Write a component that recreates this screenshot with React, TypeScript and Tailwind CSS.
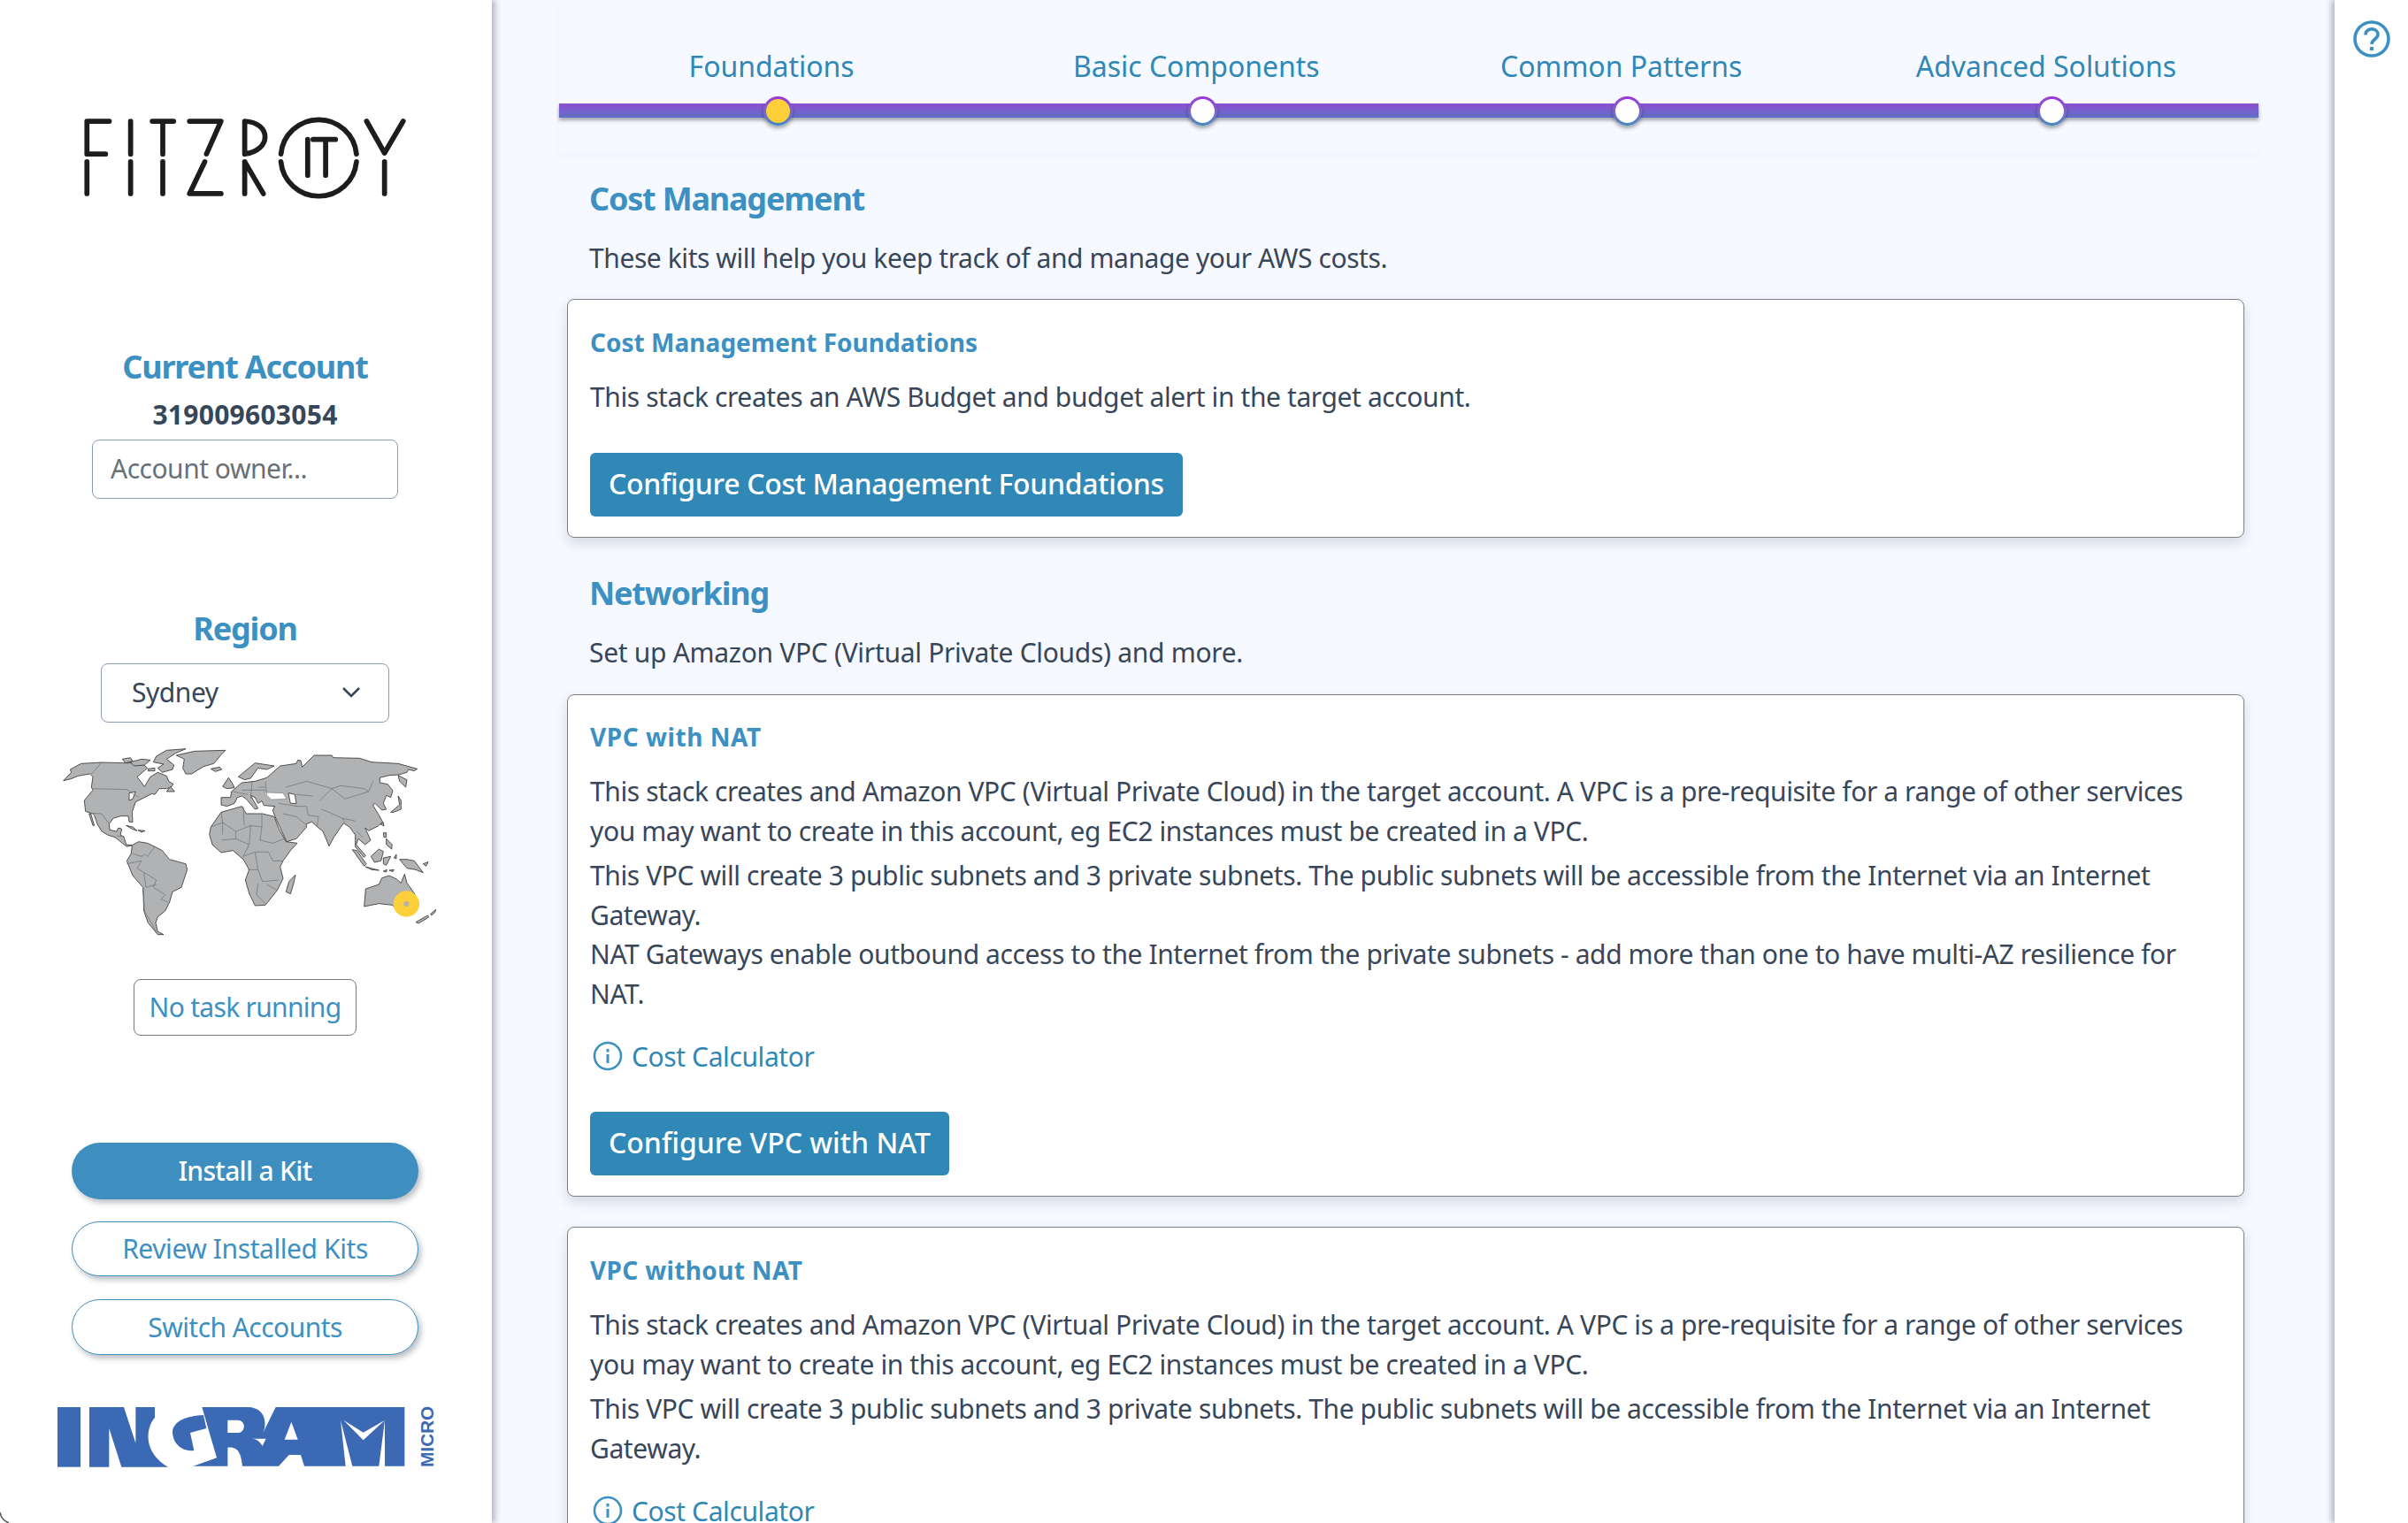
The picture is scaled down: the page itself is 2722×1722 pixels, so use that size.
import React from "react";

const font = { fontFamily: '"Noto Sans", sans-serif' };

function FitzroyLogo() {
  return (
    <svg width="372" height="98" viewBox="240 335 972 255" fill="none" stroke="#1d1d1f" strokeWidth="15" strokeLinecap="round" strokeLinejoin="round">
      <path d="M259 572V478M259 455V358H325M259 455H314" />
      <path d="M388 358V455M388 478V572" />
      <path d="M452 358H515M483 358V455M483 478V572" />
      <path d="M562 358H655L612 455M607 478L562 572H655" />
      <path d="M725 358V455C805 445 805 362 725 358ZM725 478V572M725 478L780 572" />
      <path d="M832 455A112 112 0 0 1 1055 455M832 478A112 112 0 0 0 1055 478" />
      <path d="M911 412V518M927 412H993M964 412V518" />
      <path d="M1085 358L1138 452L1193 358M1138 478V572" />
    </svg>
  );
}

function WorldMap() {
  const land = { fill: "#b1b2b4", stroke: "#2e2e2e", strokeWidth: 2.4, strokeLinejoin: "round" as const };
  return (
    <svg width="440" height="220" viewBox="0 0 1320 660" className="relative">
      <g {...land}>
        <polygon points="35,128 62,100 58,90 95,70 165,66 235,68 300,68 320,85 285,115 310,148 330,115 355,100 385,112 392,130 408,140 400,150 385,155 360,155 345,175 335,172 310,185 280,200 268,235 270,268 258,268 255,248 230,248 205,255 190,275 192,295 215,300 222,288 233,292 228,312 240,318 248,345 268,347 250,352 235,340 210,320 185,312 165,300 150,275 140,245 135,240 110,232 106,195 135,160 130,150 135,115 125,105 85,112 60,122" />
        <polygon points="122,240 135,280 140,280 128,240" />
        <polygon points="235,55 262,50 270,62 245,68" />
        <polygon points="262,65 300,55 330,58 310,75 275,78" />
        <polygon points="350,45 385,25 450,20 415,35 385,55 410,75 405,90 370,100 355,85 375,72 340,65" />
        <polygon points="322,88 345,85 345,95 322,95" />
        <polygon points="418,42 480,28 585,25 570,40 545,70 510,80 470,105 450,105 440,85 445,55" />
        <polygon points="535,88 565,82 572,90 550,97" />
        <polygon points="248,280 270,285 285,298 268,292" />
        <polygon points="288,296 312,298 300,303" />
        <polygon points="385,165 412,165 398,148" />
        <polygon points="258,170 280,165 270,190 258,195" fill="#fff" />
        <polygon points="268,347 290,335 320,340 345,352 370,365 395,395 450,410 455,430 435,490 405,505 395,540 380,570 355,590 348,610 355,640 375,650 355,650 322,610 308,570 305,490 270,450 250,400 265,375" />
      </g>
      <g fill="none" stroke="#6a6c70" strokeWidth="2">
        <polyline points="135,155 250,158 290,185" />
        <polyline points="165,66 130,105" />
        <polyline points="125,238 165,240 190,275" />
        <polyline points="215,315 240,318" />
        <polyline points="270,375 300,385 310,378 320,385 345,352" />
        <polyline points="250,410 300,400 285,425 350,465 340,490 380,515 365,530 390,540" />
        <polyline points="308,440 315,490 350,480" />
        <polyline points="305,490 310,570 350,640" />
      </g>
      <g transform="translate(480,0)">
        <g {...land}>
          <polygon points="50,310 55,285 90,235 160,215 175,240 230,240 270,250 285,290 310,335 348,340 325,365 300,400 290,420 300,460 280,500 240,550 205,552 185,510 172,465 185,430 165,395 130,365 90,372 60,345" />
          <polygon points="310,505 320,470 342,448 335,480 325,512" />
          <polygon points="245,118 290,78 345,70 350,58 360,60 365,82 405,42 465,42 470,50 560,52 600,65 690,70 755,88 745,95 725,90 720,100 692,108 660,110 628,118 628,135 655,140 672,162 665,185 650,178 640,205 650,225 635,228 612,205 604,210 625,245 638,268 622,282 590,298 578,288 597,330 578,345 555,325 548,345 580,382 574,388 545,352 545,312 525,285 505,272 472,320 456,350 435,300 420,288 398,268 378,275 380,285 345,325 312,335 272,248 265,228 272,215 235,212 228,197 215,205 205,185 190,178 215,222 205,225 175,190 160,180 145,185 135,205 110,215 90,210 90,185 122,185 125,165 160,135 205,130" />
          <polygon points="690,110 720,125 716,150 695,130" />
          <polygon points="148,115 205,68 270,78 245,90 215,85 190,120 170,125" />
          <polygon points="95,148 115,118 130,140 135,152 110,155" />
          <polygon points="535,362 550,365 582,410 575,418" />
          <polygon points="580,420 625,432 600,430" />
          <polygon points="598,385 625,360 640,368 632,400 610,405" />
          <polygon points="640,390 665,385 650,415 640,410" />
          <polygon points="640,305 650,305 650,320 642,320" />
          <polygon points="650,325 670,345 668,360 650,345" />
          <polygon points="695,395 720,395 745,400 775,440 750,430 720,425" />
          <polygon points="750,608 790,585 795,590 760,612" />
          <polygon points="800,580 818,565 815,575 803,585" />
          <polygon points="665,235 695,210 690,180 700,195 700,225 675,235" />
          <polygon points="630,275 640,270 642,282" />
          <polygon points="640,435 652,430 650,438" />
          <polygon points="660,432 676,430 672,437" />
          <polygon points="676,390 684,378 684,392" />
          <polygon points="775,410 792,404 785,418" />
          <polygon points="575,555 580,495 625,480 635,458 660,450 685,462 700,475 712,445 720,475 745,510 760,550 745,575 700,575 670,550 625,545" />
          <polygon points="235,168 300,170 312,190 260,192" fill="#fff" strokeWidth="1" />
          <polygon points="318,170 340,175 345,205 325,205" fill="#fff" />
        </g>
        <g fill="none" stroke="#6a6c70" strokeWidth="2">
          <polyline points="90,235 95,270 140,300 190,280 228,285 228,240" />
          <polyline points="165,215 168,280" />
          <polyline points="140,300 140,325 90,330" />
          <polyline points="55,285 95,270 95,310" />
          <polyline points="228,285 222,330 265,340 305,325" />
          <polyline points="190,280 185,345 140,325" />
          <polyline points="185,345 165,385 205,370 250,370 265,400 300,400" />
          <polyline points="205,370 215,430 180,430" />
          <polyline points="215,430 230,470 285,465" />
          <polyline points="215,475 210,515 240,545" />
          <polyline points="245,480 280,500" />
          <polyline points="310,150 380,130 465,155 510,190 590,165 605,130" />
          <polyline points="465,155 495,145 575,155 590,165" />
          <polyline points="465,155 425,195" />
          <polyline points="345,175 400,180" />
          <polyline points="340,215 380,215 385,245 420,250 415,285" />
          <polyline points="430,225 455,235 500,255 545,265" />
          <polyline points="300,240 345,250 375,275" />
          <polyline points="285,205 350,215" />
          <polyline points="500,255 510,270" />
          <polyline points="550,300 570,320" />
          <polyline points="160,160 240,160" />
          <polyline points="195,130 190,190" />
          <polyline points="130,165 180,175" />
          <polyline points="240,130 245,175" />
          <polyline points="215,150 240,150" />
        </g>
        <circle cx="718" cy="546" r="44" fill="#fdcf3a" />
        <circle cx="718" cy="546" r="9" fill="#b1b2b4" />
      </g>
    </svg>
  );
}

function IngramLogo() {
  return (
    <svg width="440" height="90" viewBox="0 0 1320 270" className="block">
      <g fill="#3c69b4">
        <rect x="15" y="33" width="78" height="203" />
        <path d="M123 33H240L280 155V33H345V68C310 110 310 190 390 236H232L190 105V236H123Z" />
        <g transform="translate(360 15)">
          <path d="M45 100C50 65 90 48 150 45L160 90L105 105L118 165C80 170 45 145 45 100Z" />
          <path d="M145 18H300C350 18 370 60 352 105L395 18H832V218H765V62L745 218H655L615 62L632 218H492L480 180H440L405 218H282C278 180 270 150 232 155V218H115L195 190Z" />
        </g>
      </g>
      <g fill="#fff" transform="translate(360 15)">
        <path d="M232 62H265C295 62 295 105 265 105H232Z" />
        <path d="M425 128L448 68L470 128Z" />
        <path d="M312 125C330 125 342 135 350 150L362 125Z" />
        <path d="M625 62L692 130L765 62L692 104Z" />
      </g>
      <text x="1291" y="236" transform="rotate(-90 1291 236)" fill="#3c69b4" fontSize="62" fontWeight="700" style={{ fontFamily: '"Liberation Sans", sans-serif' }}>MICRO</text>
    </svg>
  );
}

function InfoIcon() {
  return (
    <svg width="34" height="34" viewBox="0 0 34 34" fill="none" stroke="#3c90c2" strokeWidth="2.6" className="shrink-0">
      <circle cx="17" cy="17" r="15" />
      <path d="M17 15V25" strokeWidth="3" />
      <path d="M17 9V12.5" strokeWidth="3" />
    </svg>
  );
}

const paragraphGaps = ["", "mt-[5px]", "mt-[-1px]"];

function KitCard({ title, paragraphs, button, cost, extraClass, titleClass, buttonClass }: { title: string; paragraphs: string[]; button: string; cost?: boolean; extraClass: string; titleClass: string; buttonClass: string }) {
  return (
    <div className={"ml-[9px] w-[1896px] rounded-lg border border-[#7d7f85] bg-white pl-[25px] pr-[26px] pb-[23px] shadow-[0_6px_14px_rgba(0,20,60,0.14)] " + extraClass}>
      <h3 className={"text-[28px] font-bold leading-[40px] text-[#3c90c2] " + titleClass}>{title}</h3>
      <div className="mt-[19px] text-[30px] leading-[45px] tracking-[-0.4px] text-[#38465a]">
        {paragraphs.map((p, i) => (
          <p key={p} className={paragraphGaps[i]}>{p}</p>
        ))}
      </div>
      {cost && (
        <a className="mt-[26px] flex h-[44px] items-center gap-[10px] pl-[3px] text-[30px] tracking-[-0.4px] text-[#2f88b5]">
          <InfoIcon />
          Cost Calculator
        </a>
      )}
      <button className={"flex h-[72px] items-center rounded-[6px] bg-[#3088b6] px-[21px] pb-[2px] text-[32px] font-medium text-white " + buttonClass + " " + (cost ? "mt-[41px]" : "mt-[41px]")}>{button}</button>
    </div>
  );
}

const p1 = "This stack creates and Amazon VPC (Virtual Private Cloud) in the target account. A VPC is a pre-requisite for a range of other services you may want to create in this account, eg EC2 instances must be created in a VPC.";
const p2 = "This VPC will create 3 public subnets and 3 private subnets. The public subnets will be accessible from the Internet via an Internet Gateway.";
const p3 = "NAT Gateways enable outbound access to the Internet from the private subnets - add more than one to have multi-AZ resilience for NAT.";

export default function App() {
  return (
    <div style={font} className="relative flex h-[1722px] w-[2722px] overflow-hidden bg-[#f6f9ff]">
      <aside className="relative z-10 flex w-[556px] shrink-0 flex-col items-center bg-white pr-[2px] pt-[128px] shadow-[4px_0_6px_rgba(40,45,70,0.3)]">
        <FitzroyLogo />
        <h2 className="mt-[167px] text-[36px] font-bold leading-[44px] tracking-[-1.15px] text-[#3c90c2]">Current Account</h2>
        <div className="mt-[14px] pb-[1px] text-[30px] font-bold leading-[36px] tracking-[0.27px] text-[#37475a]">319009603054</div>
        <input
          placeholder="Account owner..."
          className="mt-[9px] h-[67px] w-[346px] rounded-lg border border-[#8c9bb0] bg-white px-5 pb-[2px] text-[30px] tracking-[-0.5px] outline-none placeholder:text-[#687078]"
        />
        <h2 className="mt-[125px] pb-[1px] text-[36px] font-bold leading-[44px] tracking-[-1.2px] text-[#3c90c2]">Region</h2>
        <div className="mt-[16px] flex h-[67px] w-[326px] items-center justify-between rounded-lg border border-[#8c9bb0] bg-white pb-[2px] pl-[34px] pr-[31px] text-[30px] tracking-[-0.45px] text-[#38465a]">
          Sydney
          <svg width="22" height="14" viewBox="0 0 22 14" fill="none" stroke="#37475a" strokeWidth="2.6">
            <path d="M2 2L11 11L20 2" />
          </svg>
        </div>
        <div className="ml-[60px] mt-[23px] self-start">
          <WorldMap />
        </div>
        <div className="mt-[47px] flex h-[64px] w-[252px] items-center justify-center rounded-lg border border-[#77797d] pb-[2px] text-[30px] tracking-[-0.7px] text-[#3c90c2]">No task running</div>
        <button className="mt-[121px] h-[64px] w-[392px] rounded-full bg-[#3e8fc0] pb-[2px] text-[30px] font-medium tracking-[-0.7px] text-white shadow-[3px_4px_6px_rgba(30,40,60,0.3)]">Install a Kit</button>
        <button className="mt-[25px] h-[62px] w-[392px] rounded-full border border-[#3e8fc0] bg-white pb-[2px] text-[30px] tracking-[-0.42px] text-[#3c90c2] shadow-[3px_4px_6px_rgba(30,40,60,0.3)]">Review Installed Kits</button>
        <button className="mt-[26px] h-[63px] w-[392px] rounded-full border border-[#3e8fc0] bg-white pb-[1px] text-[30px] tracking-[-0.55px] text-[#3c90c2] shadow-[3px_4px_6px_rgba(30,40,60,0.3)]">Switch Accounts</button>
        <div className="ml-[60px] mt-[48px] self-start">
          <IngramLogo />
        </div>
      </aside>

      <main className="min-w-0 flex-1 pl-[76px]">
        <div className="h-[173px] w-[1921px] pt-[53px] shadow-[0_5px_8px_rgba(30,40,120,0.025)]">
          <div className="grid grid-cols-4 text-center text-[32px] leading-[44px] tracking-[-0.03px] text-[#2f88b5]">
            <span>Foundations</span>
            <span>Basic Components</span>
            <span>Common Patterns</span>
            <span>Advanced Solutions</span>
          </div>
          <div className="mt-[20px] grid h-4 grid-cols-4 grid-rows-[16px] items-center justify-items-center bg-gradient-to-b from-[#8a4fd0] to-[#5f6ec8] shadow-[0_3px_4px_rgba(30,30,50,0.4)]">
            {["bg-[#fdcf3a]", "bg-white", "bg-white", "bg-white"].map((c, i) => (
              <div key={i} className="ml-[14px] h-[33px] w-[33px] rounded-full bg-gradient-to-b from-[#9a2fd8] to-[#3f88c0] p-[3px] shadow-[0_3px_4px_rgba(30,30,50,0.4)]">
                <div className={"h-full w-full rounded-full " + c} />
              </div>
            ))}
          </div>
        </div>

        <h2 className="ml-[34px] mt-[27px] pb-[1px] text-[36px] font-bold leading-[50px] tracking-[-1.2px] text-[#3c90c2]">Cost Management</h2>
        <p className="ml-[34px] mt-[18px] pb-[1px] text-[30px] leading-[45px] tracking-[-0.42px] text-[#38465a]">These kits will help you keep track of and manage your AWS costs.</p>
        <KitCard extraClass="mt-[23px] pt-[28px]" titleClass="tracking-[0.03px]" buttonClass="tracking-[-0.33px]" title="Cost Management Foundations" paragraphs={["This stack creates an AWS Budget and budget alert in the target account."]} button="Configure Cost Management Foundations" />

        <h2 className="ml-[34px] mt-[38px] pb-[2px] text-[36px] font-bold leading-[50px] tracking-[-1.2px] text-[#3c90c2]">Networking</h2>
        <p className="ml-[34px] mt-[17px] pb-[2px] text-[30px] leading-[45px] tracking-[-0.3px] text-[#38465a]">Set up Amazon VPC (Virtual Private Clouds) and more.</p>
        <KitCard extraClass="mt-[23px] pt-[27px]" titleClass="tracking-[0.55px]" buttonClass="tracking-[0px]" title="VPC with NAT" paragraphs={[p1, p2, p3]} button="Configure VPC with NAT" cost />
        <KitCard extraClass="mt-[34px] pt-[28px]" titleClass="tracking-[0.35px]" buttonClass="tracking-[0px]" title="VPC without NAT" paragraphs={[p1, p2]} button="Configure VPC without NAT" cost />
      </main>

      <aside className="relative z-10 w-[83px] shrink-0 bg-white pl-[21px] pt-[23px] shadow-[-4px_0_6px_rgba(40,45,70,0.3)]">
        <svg width="42" height="42" viewBox="0 0 42 42" fill="none" stroke="#3c90c2" strokeWidth="3.6">
          <circle cx="21" cy="21" r="19" />
          <path d="M14 16.5C14 7.5 28 8 28 16C28 21.5 21 21 21 27" />
          <path d="M21 30V34" strokeWidth="4" />
        </svg>
      </aside>

      <svg width="12" height="12" viewBox="0 0 12 12" fill="none" className="absolute bottom-0 left-0 z-20">
        <path d="M0 0C1 6 5 10 10 12" stroke="#555" strokeWidth="1.5" />
      </svg>
    </div>
  );
}
